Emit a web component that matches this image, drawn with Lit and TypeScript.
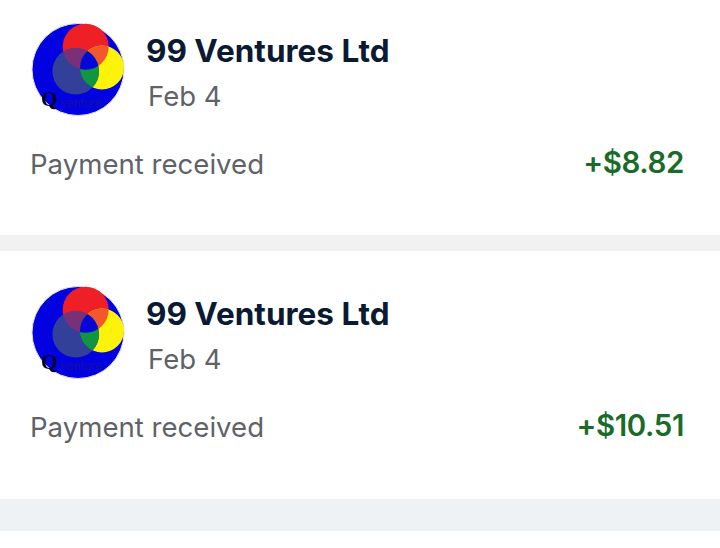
import { LitElement, html, css } from 'lit'
import { customElement } from 'lit/decorators.js'

const rows = [
  { id: 'a', name: '99 Ventures Ltd', date: 'Feb 4', label: 'Payment received', amount: '+$8.82', tall: false },
  { id: 'b', name: '99 Ventures Ltd', date: 'Feb 4', label: 'Payment received', amount: '+$10.51', tall: true },
]

@customElement('app-root')
export class AppRoot extends LitElement {
  static styles = css`
    :host {
      display: block;
      width: 720px;
      height: 548px;
      overflow: hidden;
      background: #fff;
      font-family: Inter, "Liberation Sans", sans-serif;
    }
    .card {
      height: 235px;
      box-sizing: border-box;
      padding: 23px 36px 0 31px;
      background: #fff;
    }
    .card.second { height: 248px; padding-top: 35px; }
    .gap { height: 16px; background: #f1f1f1; }
    .gap.wide { height: 32px; background: #eff2f5; }
    .top { display: flex; gap: 21px; }
    .logo { width: 94px; height: 94px; flex: none; display: block; filter: blur(0.6px); }
    .names { display: flex; flex-direction: column; padding-top: 9px; }
    .name {
      font-size: 31.5px;
      line-height: 38px;
      font-weight: 700;
      color: #0a1a33;
    }
    .date {
      font-size: 27.5px;
      line-height: 32px;
      margin: 10px 0 0 2px;
      color: #5f6368;
    }
    .bottom {
      display: flex;
      justify-content: space-between;
      align-items: center;
      margin-top: 27px;
    }
    .label { font-size: 27.6px; line-height: 40px; color: #5f6368; margin: 0 0 0 -1px; }
    .amount { font-size: 29.5px; line-height: 40px; font-weight: 600; letter-spacing: -0.4px; color: #1a6b2a; margin-top: -4px; }
  `

  private logo(id: string) {
    return html`
      <svg class="logo" viewBox="0 0 94 94">
        <defs>
          <clipPath id="${id}-red"><circle cx="54.7" cy="23.7" r="23"></circle></clipPath>
          <clipPath id="${id}-yel"><circle cx="71" cy="44.5" r="22"></circle></clipPath>
          <clipPath id="${id}-gry"><circle cx="44.7" cy="48.3" r="23.3"></circle></clipPath>
        </defs>
        <circle cx="47" cy="46.5" r="46" fill="#0202e0" stroke="#e4e0f0" stroke-width="1"></circle>
        <circle cx="54.7" cy="23.7" r="23" fill="#ee2026"></circle>
        <circle cx="71" cy="44.5" r="22" fill="#fdf20a"></circle>
        <circle cx="44.7" cy="48.3" r="23.3" fill="#32409a"></circle>
        <g clip-path="url(#${id}-red)">
          <circle cx="71" cy="44.5" r="22" fill="#f2582c"></circle>
          <circle cx="44.7" cy="48.3" r="23.3" fill="#7a3078"></circle>
        </g>
        <g clip-path="url(#${id}-yel)">
          <circle cx="44.7" cy="48.3" r="23.3" fill="#109640"></circle>
          <g clip-path="url(#${id}-gry)"><circle cx="54.7" cy="23.7" r="23" fill="#0606d8"></circle></g>
        </g>
        <text x="10" y="83" font-family="Liberation Serif, serif" font-size="21" font-weight="700" fill="#02021e">Q</text>
        <text x="30" y="84" font-family="Inter, sans-serif" font-size="11.5" fill="#14149a">venture</text>
      </svg>
    `
  }

  render() {
    return html`
      ${rows.map(
        (r) => html`
          <div class="card ${r.tall ? 'second' : ''}">
            <div class="top">
              ${this.logo(r.id)}
              <div class="names">
                <div class="name">${r.name}</div>
                <div class="date">${r.date}</div>
              </div>
            </div>
            <div class="bottom">
              <div class="label">${r.label}</div>
              <div class="amount">${r.amount}</div>
            </div>
          </div>
          <div class="gap ${r.tall ? 'wide' : ''}"></div>
        `
      )}
    `
  }
}
